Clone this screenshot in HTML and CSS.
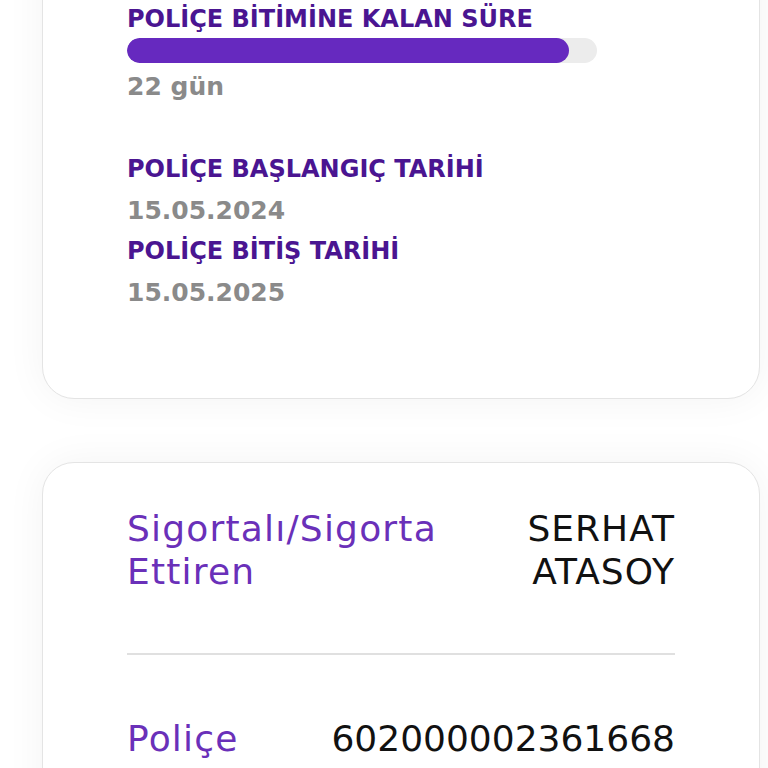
FILE: index.html
```html
<!DOCTYPE html>
<html lang="tr">

<head>
    <meta charset="UTF-8">
    <meta name="viewport" content="width=device-width, initial-scale=1.0">
    <title>Poliçe Detayı</title>
    <link rel="stylesheet" href="styles.css">
</head>

<body>
    <div class="page">
        <div class="card card-dates">
            <h3 class="field-title">POLİÇE BİTİMİNE KALAN SÜRE</h3>
            <div class="progress">
                <div class="progress-fill" style="width: 94%"></div>
            </div>
            <p class="field-value">22 gün</p>

            <div class="dates">
                <h3 class="field-title">POLİÇE BAŞLANGIÇ TARİHİ</h3>
                <p class="field-value">15.05.2024</p>
                <h3 class="field-title">POLİÇE BİTİŞ TARİHİ</h3>
                <p class="field-value">15.05.2025</p>
            </div>
        </div>

        <div class="card card-info">
            <div class="info-row">
                <span class="info-label">Sigortalı/Sigorta Ettiren</span>
                <span class="info-value spaced">SERHAT ATASOY</span>
            </div>
            <hr class="divider">
            <div class="info-row">
                <span class="info-label">Poliçe No</span>
                <span class="info-value">602000002361668</span>
            </div>
        </div>
    </div>
</body>

</html>
```

FILE: styles.css
```css
body {
    font-family: "DejaVu Sans", "Open Sans", sans-serif;
    margin: 0;
    padding: 0;
    background-color: #fff;
}

.page {
    padding: 0 8px 40px 42px;
    margin-top: -80px;
}

.card {
    background-color: #fff;
    border: 1px solid #e4e4e4;
    border-radius: 32px;
    box-shadow: 0 0 40px rgba(0, 0, 0, 0.05);
    padding: 0 84px;
}

.card-dates {
    padding-top: 78px;
    padding-bottom: 85px;
    margin-bottom: 63px;
}

.field-title {
    margin: 0;
    font-size: 24px;
    font-weight: 700;
    line-height: 41px;
    color: #4a1591;
}

.field-value {
    margin: 0;
    font-size: 25px;
    font-weight: 700;
    line-height: 41px;
    color: #8a8a8a;
}

.progress {
    width: 470px;
    height: 25px;
    margin: -2px 0 3px;
    background-color: #ececec;
    border-radius: 13px;
    overflow: hidden;
}

.progress-fill {
    height: 100%;
    background-color: #6629bf;
    border-radius: 13px;
}

.dates {
    margin-top: 42px;
}

.card-info {
    padding-top: 44px;
    padding-bottom: 60px;
}

.info-row {
    display: grid;
    grid-template-columns: 1fr auto;
    column-gap: 64px;
    align-items: start;
}

.info-label {
    font-size: 36px;
    line-height: 43px;
    letter-spacing: 1.2px;
    color: #6a30b9;
}

.info-value {
    font-size: 36px;
    line-height: 43px;
    color: #111;
    text-align: right;
}

.spaced {
    letter-spacing: 1px;
}

.divider {
    border: none;
    border-top: 2px solid #e0e0e0;
    margin: 60px 0 62px;
}
```
